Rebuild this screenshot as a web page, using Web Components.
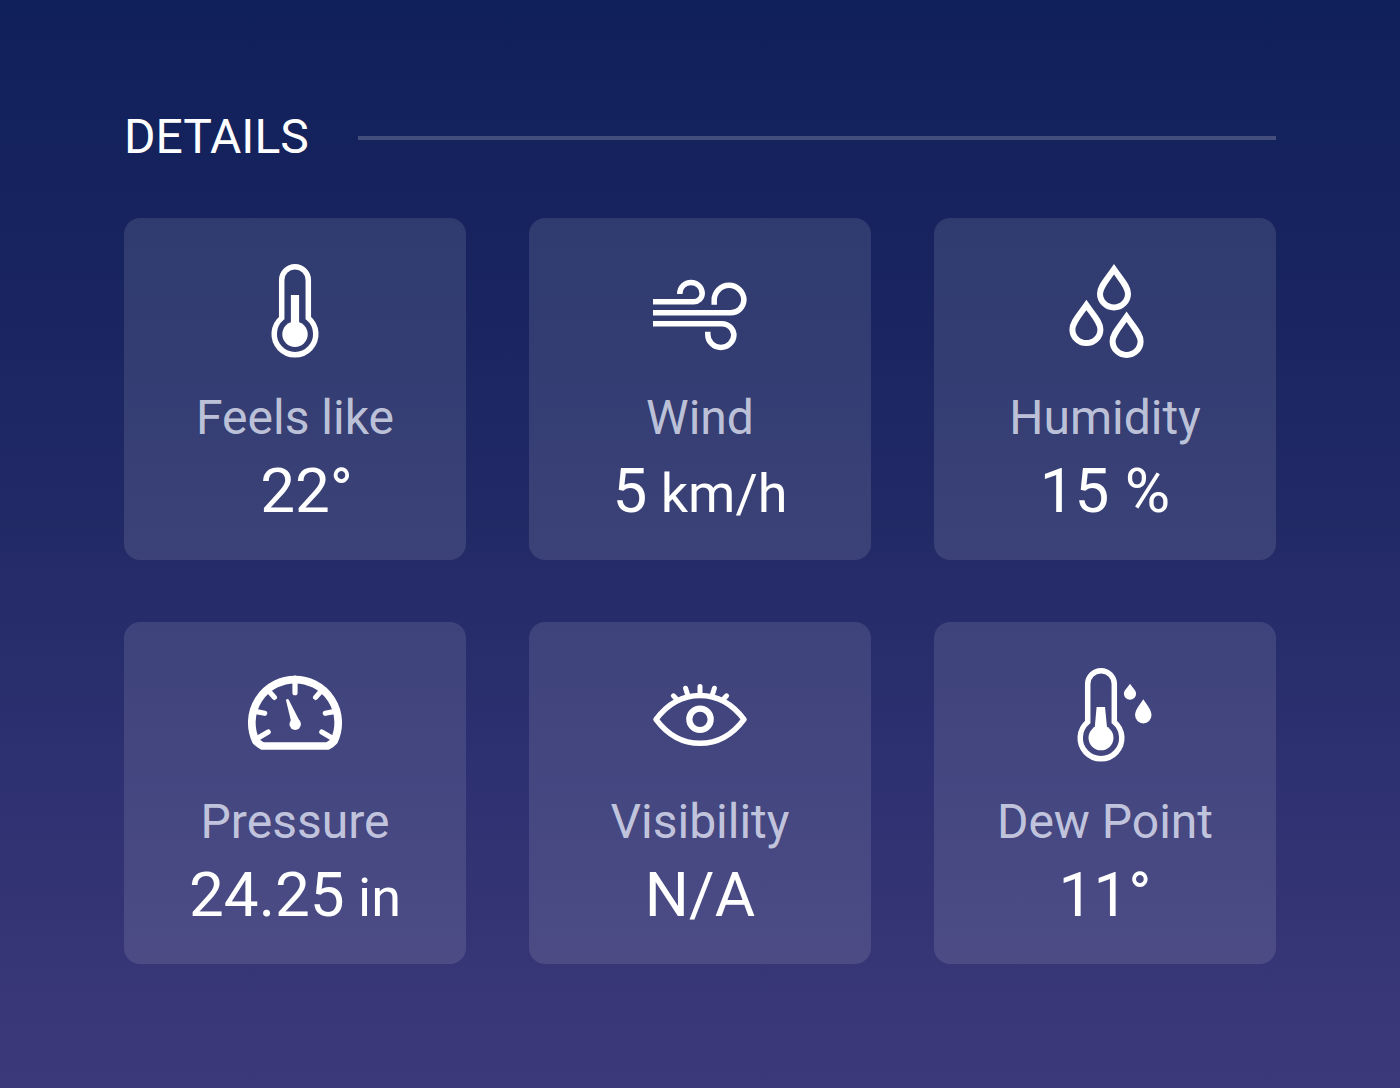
<!DOCTYPE html>
<html lang="en">
<head>
<meta charset="utf-8">
<meta name="viewport" content="width=device-width, initial-scale=1">
<title>Weather details</title>
<style>
  html { min-height: 100%; background: linear-gradient(#10205a 0%, #18245f 25%, #222a66 48%, #2d3071 70%, #3c3979 100%); }
  body { margin: 0; font-family: Roboto, "Liberation Sans", sans-serif; color: #fff; }
</style>
</head>
<body>
<details-panel>
  <section-heading slot="heading">DETAILS</section-heading>
  <metric-card>
    <weather-icon slot="icon" name="thermometer"></weather-icon>
    <span slot="label">Feels like</span>
    <span slot="value">22</span><span slot="hanging">°</span>
  </metric-card>
  <metric-card>
    <weather-icon slot="icon" name="wind"></weather-icon>
    <span slot="label">Wind</span>
    <span slot="value">5</span><span slot="unit">&nbsp;km/h</span>
  </metric-card>
  <metric-card>
    <weather-icon slot="icon" name="drops"></weather-icon>
    <span slot="label">Humidity</span>
    <span slot="value">15 %</span>
  </metric-card>
  <metric-card>
    <weather-icon slot="icon" name="gauge"></weather-icon>
    <span slot="label">Pressure</span>
    <span slot="value">24.25</span><span slot="unit">&nbsp;in</span>
  </metric-card>
  <metric-card>
    <weather-icon slot="icon" name="eye"></weather-icon>
    <span slot="label">Visibility</span>
    <span slot="value">N/A</span>
  </metric-card>
  <metric-card>
    <weather-icon slot="icon" name="dew"></weather-icon>
    <span slot="label">Dew Point</span>
    <span slot="value">11°</span>
  </metric-card>
</details-panel>

<script>
class ShadowElement extends HTMLElement {
  constructor() {
    super();
    this.attachShadow({ mode: "open" });
  }
  connectedCallback() {
    this.shadowRoot.innerHTML = this.render();
  }
}

customElements.define("details-panel", class extends ShadowElement {
  render() {
    return `
      <style>
        :host { display: block; padding: 109px 124px 124px; }
        .grid { display: grid; grid-template-columns: repeat(3, minmax(0, 1fr)); gap: 62px 63px; margin-top: 53px; }
      </style>
      <slot name="heading"></slot>
      <div class="grid"><slot></slot></div>`;
  }
});

customElements.define("section-heading", class extends ShadowElement {
  render() {
    return `
      <style>
        :host { display: flex; align-items: center; gap: 49px; }
        h2 { margin: 0; font-size: 48px; line-height: 56px; font-weight: 400; }
        .rule { flex: 1; height: 4px; margin-top: 2px; background: rgba(255, 255, 255, .2); }
      </style>
      <h2><slot></slot></h2>
      <div class="rule"></div>`;
  }
});

customElements.define("metric-card", class extends ShadowElement {
  render() {
    return `
      <style>
        :host {
          display: flex; flex-direction: column; align-items: center;
          box-sizing: border-box; aspect-ratio: 1; padding-top: 46px;
          border-radius: 16px; background: rgba(255, 255, 255, .11); white-space: nowrap;
        }
        p { margin: 0; }
        .label { margin-top: 32px; font-size: 48px; line-height: 56px; color: rgba(240, 244, 255, .74); }
        .value { margin-top: 8px; font-size: 62px; line-height: 74px; }
        slot[name="unit"] { font-size: 54px; }
        .hanging { display: inline-block; width: 0; }
      </style>
      <slot name="icon"></slot>
      <p class="label"><slot name="label"></slot></p>
      <p class="value"><slot name="value"></slot><slot name="unit"></slot><span class="hanging"><slot name="hanging"></slot></span></p>`;
  }
});

const thermometer = '<path class="line" d="M33.7 54V16a13.3 13.3 0 0 1 26.6 0v38a20.8 20.8 0 1 1-26.6 0z"/>';
const drop = (x, y) => `<path class="line" style="stroke-width:6" d="M${x} ${y + 5.3}c-8 11.5-14 17.5-14 24.4a14 13.7 0 0 0 28 0c0-6.9-6-12.9-14-24.4z"/>`;

const icons = {
  thermometer: `${thermometer}<circle cx="47" cy="70.2" r="12.7"/><path d="M42.9 31h8.2v32h-8.2z"/>`,
  wind: `<g class="line">
    <path d="M0 37.8H40.5A8.6 8.6 0 0 0 49.2 29.6A11.2 11.2 0 0 0 26.8 29.6V30"/>
    <path d="M0 48.8H77.5A13.2 13.2 0 0 0 90.9 36.2A14.85 14.85 0 0 0 61.2 36.2V40.7"/>
    <path d="M0 59.7H69A12 12 0 0 1 80.9 70.4A13.05 13.05 0 0 1 54.8 70.4V67.7"/></g>`,
  drops: drop(56, 0) + drop(28.4, 35.7) + drop(68.6, 47.5),
  gauge: `
    <path class="line" stroke-linejoin="round" style="stroke-width:7.7" d="M14.5 78Q10.5 76 7.8 72.9A43.2 43.2 0 1 1 86.2 72.9Q83.5 76 79.5 78z"/>
    <path class="line round" style="stroke-width:5.2" d="M47 10V24.7M21 23.2L26.4 29.4M73 23.2L67.6 29.4M7 43.4L16.7 45.3M87 43.4L77.3 45.3M10 70L20.2 64M84 70L73.8 64"/>
    <circle cx="47.2" cy="56.2" r="5.7"/><path d="M38 32.2Q38.8 30.4 40.6 31.6L51.6 53L43.6 55.6z"/>`,
  eye: `
    <path class="line" stroke-linejoin="round" d="M3 51.3Q21 27.4 47 27.4T91 51.3Q73 75.3 47 75.3T3 51.3z"/>
    <circle class="line" style="stroke-width:6.2" cx="47" cy="51.3" r="10.7"/>
    <path class="line round" style="stroke-width:5" d="M47 18.5V27M32.6 20.2L35 28M61.4 20.2L59 28M20.4 27.8L24.4 32M73.6 27.8L69.6 32"/>`,
  dew: `<g transform="translate(-4 0)">${thermometer}<circle cx="47" cy="69.8" r="12.5"/><path d="M42.6 39h8.4l2.2 22h-12.6z"/></g>
    <path d="M72 15.7c-3.4 4.8-6.1 7-6.1 10a6.1 6.1 0 0 0 12.2 0c0-3-2.7-5.2-6.1-10z"/>
    <path d="M85.3 31.3c-4.6 6.8-8.2 11.2-8.2 16a8.2 8.2 0 0 0 16.4 0c0-4.8-3.6-9.2-8.2-16z"/>`
};

customElements.define("weather-icon", class extends ShadowElement {
  render() {
    return `
      <style>
        :host { display: block; width: 94px; height: 94px; flex: none; }
        svg { display: block; width: 100%; height: 100%; fill: #fff; overflow: visible; }
        .line { fill: none; stroke: #fff; stroke-width: 5.5; }
        .round { stroke-linecap: round; }
      </style>
      <svg viewBox="0 0 94 94" aria-hidden="true">${icons[this.getAttribute("name")]}</svg>`;
  }
});
</script>
</body>
</html>
